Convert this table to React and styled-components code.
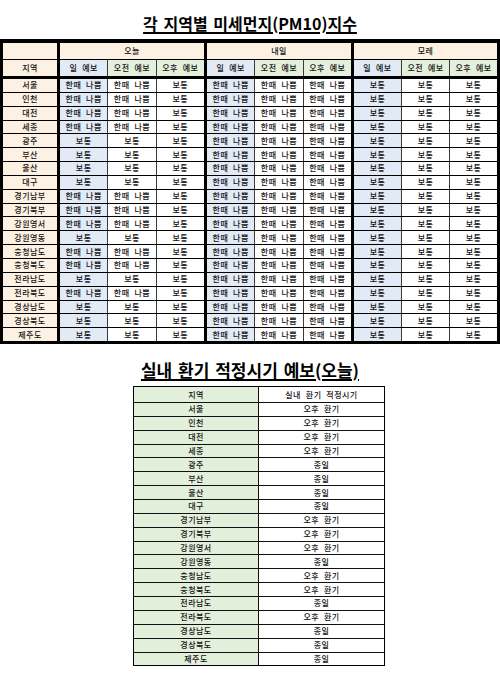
import React from 'react';
import styled, { createGlobalStyle } from 'styled-components';

const GlobalStyle = createGlobalStyle`
  html, body {
    margin: 0;
    padding: 0;
    background: #fff;
  }
  body {
    font-family: "Noto Sans CJK KR", "Noto Sans", sans-serif;
    color: #222;
  }
`;

// palette
const CREAM = '#fdf1e3';
const BLUE = '#e2eaf6';
const GREEN = '#e4f0dc';
const GREEN2 = '#e2efda';

const BAD = '한때 나쁨';
const OK = '보통';

const regions = [
  '서울', '인천', '대전', '세종', '광주', '부산', '울산', '대구', '경기남부', '경기북부',
  '강원영서', '강원영동', '충청남도', '충청북도', '전라남도', '전라북도', '경상남도', '경상북도', '제주도',
];

// today's forecast: 1 = 한때 나쁨 until the afternoon
const badToday = [1, 1, 1, 1, 0, 0, 0, 0, 1, 1, 1, 0, 1, 1, 0, 1, 0, 0, 0];

const rows = regions.map((name, i) => ({
  name,
  today: badToday[i] ? [BAD, BAD, OK] : [OK, OK, OK],
  tomorrow: [BAD, BAD, BAD],
  after: [OK, OK, OK],
  vent: badToday[i] ? '오후 환기' : '종일',
}));

const days = ['오늘', '내일', '모레'];
const subHeads = ['일 예보', '오전 예보', '오후 예보'];

const Title = styled.h1`
  margin: 0;
  padding: ${(p) => p.$top}px 0 ${(p) => p.$bottom}px;
  text-align: center;
  font-size: ${(p) => p.$size}px;
  line-height: 20px;
  font-weight: 700;
  text-decoration: underline;
  text-decoration-thickness: 1.5px;
  text-underline-offset: 2px;
  color: #000;
  word-spacing: 2px;
`;

const Sheet = styled.div`
  background: #000;
  padding: 4px 3px 3px;
  display: flex;
  flex-direction: column;
  gap: 3px;
`;

const Block = styled.div`
  display: flex;
  flex-direction: column;
  gap: 1px;
`;

const Row = styled.div`
  display: grid;
  grid-template-columns: 54px 144px 144px 143px;
  column-gap: 3px;
  height: ${(p) => p.$h}px;
`;

const Group = styled.div`
  display: grid;
  grid-template-columns: 1fr 1fr 1fr;
  gap: 1px;
  background: #3a3a3a;
`;

const Cell = styled.div`
  background: ${(p) => p.$bg || '#fff'};
  grid-column: ${(p) => (p.$span ? `span ${p.$span}` : 'auto')};
  display: flex;
  align-items: center;
  justify-content: center;
  font-size: 8px;
  line-height: 1;
  font-weight: 500;
  letter-spacing: 0.5px;
  word-spacing: 2.5px;
  white-space: nowrap;
  color: #111;
`;

const VentWrap = styled.div`
  margin-left: 133px;
  width: 250px;
  display: grid;
  grid-template-columns: 124px 1fr;
  grid-template-rows: 15px;
  grid-auto-rows: 12.86px;
  gap: 1px;
  background: #111;
  border: 1px solid #000;
`;

const ForecastTable = () => (
  <Sheet>
    <Block>
      <Row $h={16}>
        <Cell $bg={CREAM} />
        {days.map((d) => (
          <Group key={d}>
            <Cell $bg={CREAM} $span={3}>{d}</Cell>
          </Group>
        ))}
      </Row>
      <Row $h={16}>
        <Cell $bg={CREAM}>지역</Cell>
        {days.map((d) => (
          <Group key={d}>
            {subHeads.map((s, j) => (
              <Cell key={s} $bg={j === 0 ? BLUE : GREEN}>{s}</Cell>
            ))}
          </Group>
        ))}
      </Row>
    </Block>
    <Block>
      {rows.map((r) => (
        <Row key={r.name} $h={12.85}>
          <Cell $bg={CREAM}>{r.name}</Cell>
          {[r.today, r.tomorrow, r.after].map((vals, g) => (
            <Group key={g}>
              {vals.map((v, j) => (
                <Cell key={j} $bg={j === 0 ? BLUE : '#fff'}>{v}</Cell>
              ))}
            </Group>
          ))}
        </Row>
      ))}
    </Block>
  </Sheet>
);

const VentTable = () => (
  <VentWrap>
    <Cell $bg={GREEN2}>지역</Cell>
    <Cell>실내 환기 적정시기</Cell>
    {rows.map((r) => (
      <React.Fragment key={r.name}>
        <Cell $bg={GREEN2}>{r.name}</Cell>
        <Cell>{r.vent}</Cell>
      </React.Fragment>
    ))}
  </VentWrap>
);

export default function App() {
  return (
    <>
      <GlobalStyle />
      <Title $size={16} $top={13} $bottom={6}>각 지역별 미세먼지(PM10)지수</Title>
      <ForecastTable />
      <Title $size={17} $top={16} $bottom={6}>실내 환기 적정시기 예보(오늘)</Title>
      <VentTable />
    </>
  );
}
